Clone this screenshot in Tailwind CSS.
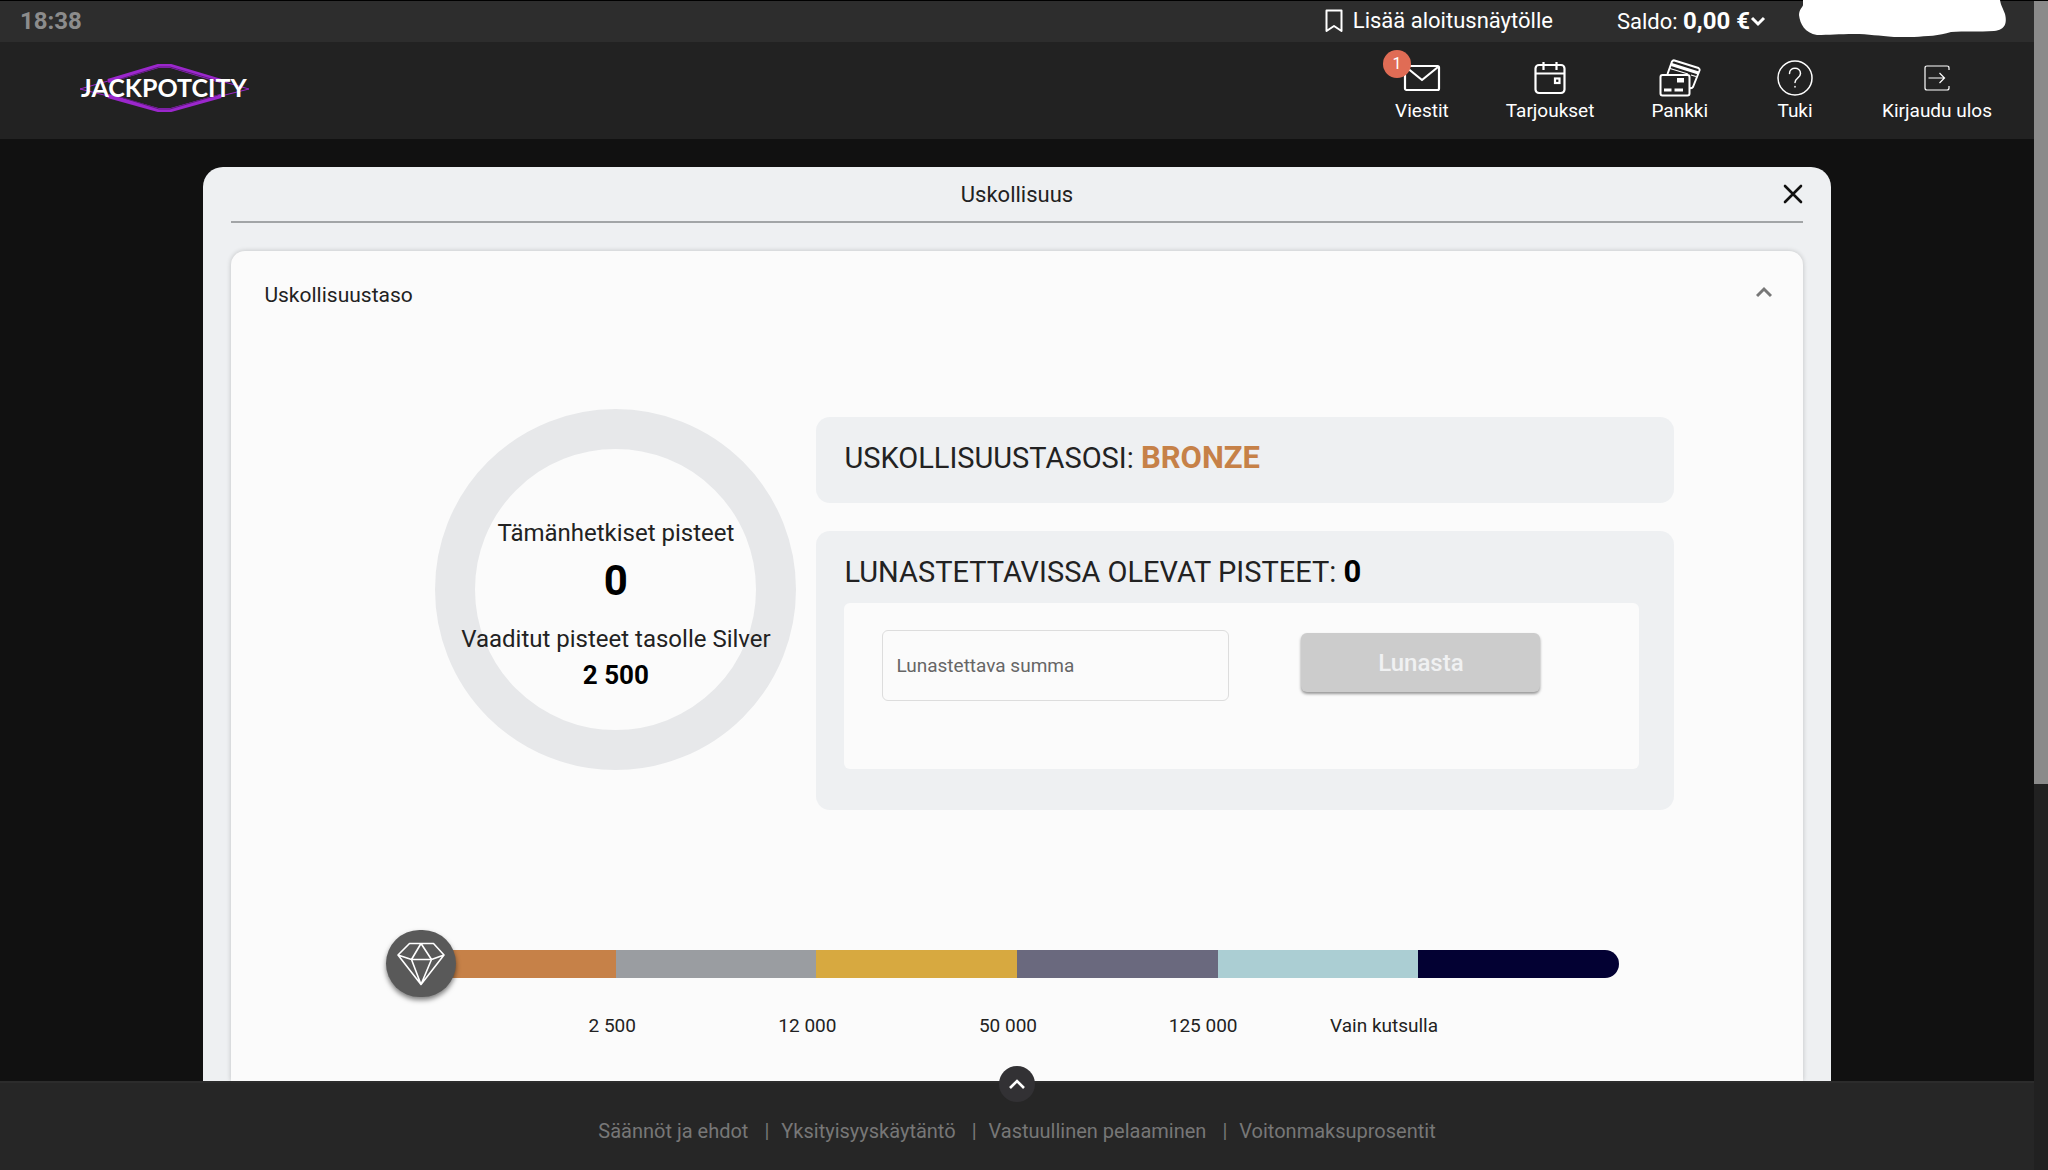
<!DOCTYPE html>
<html lang="fi">
<head>
<meta charset="utf-8">
<title>JackpotCity – Uskollisuus</title>
<meta name="viewport" content="width=device-width, initial-scale=1">
<script src="https://cdn.jsdelivr.net/npm/@tailwindcss/browser@4"></script>
</head>
<body class="flex h-screen overflow-hidden bg-[#111] font-[Roboto,sans-serif] text-[#222]">
<div class="relative flex min-w-0 flex-1 flex-col">

  <!-- Top bar -->
  <div class="flex h-[42px] shrink-0 items-center border-t border-black bg-[#2d2d2d] pr-[27px] pb-px pl-5 text-[22px] leading-none text-white">
    <time class="text-2xl leading-none font-bold text-[#8c8c8c]">18:38</time>
    <a href="#" class="ml-auto flex items-center gap-[10px]">
      <svg class="h-6 w-[18px]" viewBox="0 0 18 24" fill="none" stroke="currentColor" stroke-width="2" stroke-linejoin="round"><path d="M1.500 1.500h15v20.500L9 17l-7.500 5z"/></svg>
      Lisää aloitusnäytölle
    </a>
    <button type="button" class="ml-16 flex items-center">
      <span>Saldo: <b class="text-2xl leading-none">0,00 €</b></span>
      <svg class="h-3 w-4" viewBox="0 0 16 12" fill="none" stroke="currentColor" stroke-width="3"><path d="M2 3l6 6 6-6"/></svg>
    </button>
    <svg class="-mt-px ml-[33px] h-[37px] w-[208px] self-start" viewBox="0 0 208 37" fill="#fff"><path d="M4 0H201C202 6 204 8 206 14C208 22 207 30 195 31C180 32 165 31 152 32C140 36 128 36 115 37H95C80 36 70 34 55 34C40 34 30 35 18 35C6 33 1 24 0 15C0 9 4 7 4 5z"/></svg>
  </div>

  <!-- Main navigation -->
  <header class="flex h-[97px] shrink-0 items-center justify-between bg-[#222] pr-[42px] pl-20 text-white">
    <a href="#" aria-label="JackpotCity" class="pb-[5px]">
      <svg class="h-[50px] w-[170px]" viewBox="0 0 170 50">
        <g fill="none" stroke="#9b27cc">
          <path stroke-width="4" d="M28 18L78 3h13l50 15M28 33l50 14h13l50-14"/>
          <path stroke-width="1" d="M0 26l28-8M0 26l28 7M169 26l-28-8M169 26l-28 7"/>
          <path stroke="#5c1a7a" stroke-width="1" d="M34 18L79 4h11l48 14M34 32l45 14h11l48-14"/>
        </g>
        <text x="1" y="34" fill="#fff" font-family="Lato" font-weight="700" font-size="25">JACKPOTCITY</text>
      </svg>
    </a>
    <nav class="flex gap-[57px] text-[19px] leading-[26px]">
      <a href="#" class="flex flex-col items-center">
        <span class="relative flex h-10 items-center">
          <svg class="h-7 w-[38px]" viewBox="0 0 38 28" fill="none" stroke="currentColor" stroke-width="2.200" stroke-linejoin="round"><rect x="2" y="2" width="34" height="24" rx="1.500"/><path d="M3 3l16 13L35 3"/></svg>
          <span class="absolute -top-2 -left-5 flex size-7 items-center justify-center rounded-full bg-[#e06c55] text-base">1</span>
        </span>
        Viestit
      </a>
      <a href="#" class="flex flex-col items-center">
        <span class="flex h-10 items-center">
          <svg class="h-[34px] w-8" viewBox="0 0 32 34" fill="none" stroke="currentColor" stroke-width="2.200"><rect x="1.500" y="4" width="29" height="28" rx="3.500"/><path d="M2 12.500h28M9.500 1v8M22.500 1v8"/><rect x="21" y="17.500" width="4.500" height="4.500"/></svg>
        </span>
        Tarjoukset
      </a>
      <a href="#" class="flex flex-col items-center">
        <span class="flex h-10 items-center">
          <svg class="h-[38px] w-[42px]" viewBox="0 0 42 38" fill="none" stroke="currentColor" stroke-width="2" stroke-linejoin="round"><rect x="1.500" y="16" width="29" height="20.500" rx="2"/><path d="M8.500 15L13 2.500q1-1.500 2.500-1L39.500 9q1.500 1 1 2.500L34 28q-1 1.500-3 1"/><path stroke-width="3" d="M12.500 5.500l27 8.500M5 31h7.500M15.500 31h8.500"/><path stroke-width="1.300" d="M11 9.500l18 5.500M32 16l5 1.500"/><path fill="currentColor" stroke="none" d="M18 19h7v4.500h-7z"/></svg>
        </span>
        Pankki
      </a>
      <a href="#" class="flex min-w-[60px] flex-col items-center">
        <span class="flex h-10 items-center">
          <svg class="size-9" viewBox="0 0 36 36" fill="none" stroke="currentColor" stroke-width="1.500" stroke-linecap="round"><circle cx="18" cy="18" r="17"/><path d="M12.500 13.500c0-7 11-7 11 0 0 4.500-5.500 4.500-5.500 9M18 26.500v.6"/></svg>
        </span>
        Tuki
      </a>
      <a href="#" class="flex flex-col items-center">
        <span class="flex h-10 items-center">
          <svg class="size-[26px]" viewBox="0 0 26 26" fill="none" stroke="currentColor" stroke-width="1.200"><path d="M25 5V3q0-2-2-2H3Q1 1 1 3v20q0 2 2 2h20q2 0 2-2v-2M4.500 13H20M15.500 8l5 5-5 5"/></svg>
        </span>
        Kirjaudu ulos
      </a>
    </nav>
  </header>

  <!-- Loyalty dialog -->
  <main class="mt-7 flex min-h-0 w-4/5 flex-1 flex-col self-center overflow-hidden rounded-t-[20px] bg-[#eef0f2] px-7">
    <div class="relative flex h-14 shrink-0 items-center justify-center border-b-2 border-[#a2a5a7] text-[22px]">
      <h1>Uskollisuus</h1>
      <button type="button" aria-label="Sulje" class="absolute right-0">
        <svg class="size-5" viewBox="0 0 20 20" fill="none" stroke="#111" stroke-width="2.600" stroke-linecap="round"><path d="M2 2l16 16M18 2L2 18"/></svg>
      </button>
    </div>

    <section class="mt-7 flex-1 rounded-t-[14px] bg-[#fbfbfb] shadow-[0_0_5px_rgba(0,0,0,0.2)]">
      <button type="button" class="flex h-[88px] w-full items-center justify-between pt-px pr-[31px] pl-[33px] text-[21px]">
        <span>Uskollisuustaso</span>
        <svg class="mb-2 h-3 w-4" viewBox="0 0 16 12" fill="none" stroke="#777" stroke-width="3"><path d="M1 10l7-7 7 7"/></svg>
      </button>

      <div class="flex items-start gap-5 pt-[70px] pr-[129px] pl-[204px]">
        <div class="flex size-[361px] shrink-0 flex-col items-center rounded-full border-40 border-[#e7e8ea] pt-[68px] text-2xl whitespace-nowrap">
          <p class="leading-8">Tämänhetkiset pisteet</p>
          <p class="text-[42px] leading-16 font-bold text-black">0</p>
          <p class="mt-2 leading-9">Vaaditut pisteet tasolle Silver</p>
          <p class="text-[26px] leading-9 font-bold text-black">2 500</p>
        </div>

        <div class="mt-2 flex min-w-0 flex-1 flex-col gap-7 text-[29px] leading-11">
          <p class="rounded-[14px] bg-[#eef0f2] px-7 pt-[19px] pb-[23px]">USKOLLISUUSTASOSI: <b class="text-[31px] text-[#c68148]">BRONZE</b></p>
          <div class="rounded-[14px] bg-[#eef0f2] pt-[19px] pr-[35px] pb-[41px] pl-7">
            <h2>LUNASTETTAVISSA OLEVAT PISTEET: <b class="text-[31px] text-black">0</b></h2>
            <form class="mt-[9px] flex h-[166px] items-start gap-[72px] rounded-md bg-[#fbfbfb] pt-[27px] pl-[38px]">
              <input type="text" aria-label="Lunastettava summa" placeholder="Lunastettava summa" class="h-[71px] w-[347px] rounded-md border border-[#ddd] px-[13px] text-[19px] placeholder:text-[#666]">
              <button type="button" disabled class="mt-[3px] h-[59px] w-[239px] rounded-md bg-[#ccc] text-2xl leading-none font-medium text-[#f0f1f2] shadow-[0_2px_3px_rgba(0,0,0,0.4)]">Lunasta</button>
            </form>
          </div>
        </div>
      </div>

      <!-- Tier scale -->
      <div class="mt-[140px] px-[184px]">
        <div class="relative">
          <div class="grid h-7 grid-cols-6 overflow-hidden rounded-full">
            <span class="bg-[#c68148]"></span>
            <span class="bg-[#9a9da1]"></span>
            <span class="bg-[#d7a940]"></span>
            <span class="bg-[#6a697e]"></span>
            <span class="bg-[#abced3]"></span>
            <span class="bg-[#030133]"></span>
          </div>
          <span class="absolute -top-5 -left-[29px] flex h-[67px] w-[70px] items-center justify-center rounded-full bg-[#595959] shadow-[0_3px_5px_rgba(0,0,0,0.5)]">
            <svg class="h-11 w-12" viewBox="0 0 48 44" fill="none" stroke="#fff" stroke-width="1.600" stroke-linejoin="round"><path d="M12.500 1.500h24L47 13 24 42.500 1 13zM24 1.500l-9.500 16L24 42.500l10.500-25L24 1.500M1 13l13.500 4.500h20L47 13"/></svg>
          </span>
        </div>
        <ul class="mt-9 grid translate-x-5 grid-cols-6 text-right text-[19px] leading-6">
          <li>2 500</li>
          <li>12 000</li>
          <li>50 000</li>
          <li>125 000</li>
          <li>Vain kutsulla</li>
        </ul>
      </div>
    </section>
  </main>

  <!-- Footer -->
  <footer class="relative flex h-[89px] shrink-0 items-center justify-center border-t-2 border-[#2c2c2c] bg-[#262626] pt-2 text-xl text-[#777]">
    <button type="button" aria-label="Näytä lisää" class="absolute -top-[17px] flex size-9 items-center justify-center rounded-full bg-[#323134]">
      <svg class="h-3 w-4" viewBox="0 0 16 12" fill="none" stroke="#fff" stroke-width="2.600"><path d="M1 10l7-7 7 7"/></svg>
    </button>
    <nav class="flex">
      <a href="#">Säännöt ja ehdot</a>
      <span class="mr-3 ml-4">|</span>
      <a href="#">Yksityisyyskäytäntö</a>
      <span class="mr-3 ml-4">|</span>
      <a href="#">Vastuullinen pelaaminen</a>
      <span class="mr-3 ml-4">|</span>
      <a href="#">Voitonmaksuprosentit</a>
    </nav>
  </footer>
</div>

<!-- Page scroll indicator -->
<div class="w-[14px] shrink-0 border-t border-black bg-[#212121]">
  <div class="h-[67%] bg-[#8a8a8a]"></div>
</div>
</body>
</html>
